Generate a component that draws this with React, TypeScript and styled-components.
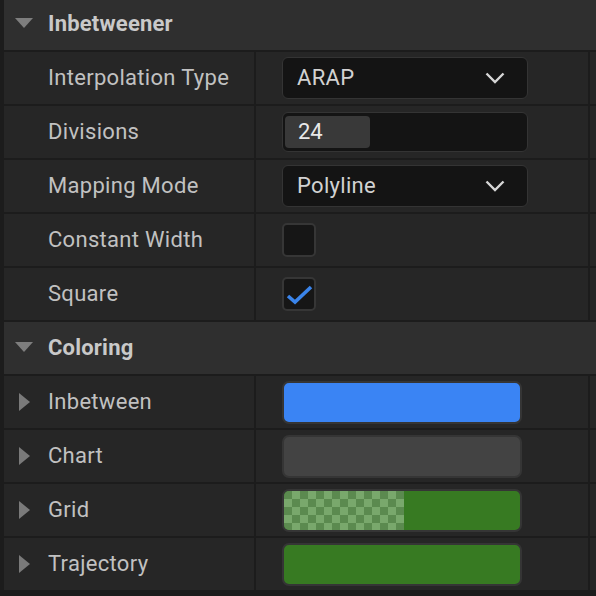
import React from "react";
import styled, { createGlobalStyle } from "styled-components";

const Global = createGlobalStyle`
  html, body { margin: 0; padding: 0; background: #1b1b1b; }
  body { font-family: Roboto, "Noto Sans", "Liberation Sans", sans-serif; }
`;

const Panel = styled.div`
  width: 596px;
  height: 596px;
  overflow: hidden;
  background: #1c1c1c;
  padding-left: 4px;
  box-sizing: border-box;
  display: flex;
  flex-direction: column;
  gap: 2px;
`;

const Header = styled.div<{ $h: number }>`
  height: ${(p) => p.$h}px;
  background: #2f2f2f;
  display: flex;
  align-items: center;
  padding-left: 10px;
  padding-bottom: ${(p) => (52 - p.$h) + 2}px;
  box-sizing: border-box;
  gap: 14px;
`;

const HeaderTitle = styled.span`
  font-size: 22px;
  font-weight: 700;
  color: #c9c9c9;
  letter-spacing: 0.2px;
`;

const Row = styled.div`
  display: grid;
  grid-template-columns: 250px 332px 6px;
  column-gap: 2px;
  height: 52px;
`;

const NameCell = styled.div`
  background: #262626;
  display: flex;
  align-items: center;
  padding-left: 10px;
  gap: 14px;
`;

const ValueCell = styled.div`
  background: #262626;
  display: flex;
  align-items: center;
  padding-left: 26px;
`;

const Filler = styled.div`
  background: #262626;
`;

const IconSlot = styled.span`
  width: 20px;
  height: 20px;
  display: flex;
  align-items: center;
  justify-content: center;
  flex: none;
`;

const Label = styled.span`
  font-size: 22px;
  color: #c1c1c1;
  letter-spacing: 0.3px;
  padding-bottom: 2px;
`;

const Combo = styled.div`
  width: 246px;
  height: 42px;
  box-sizing: border-box;
  background: #141414;
  border: 1.5px solid #343434;
  border-radius: 6px;
  display: flex;
  align-items: center;
  justify-content: space-between;
  padding: 0 22px 0 14px;
`;

const ComboText = styled.span`
  font-size: 22px;
  color: #d2d2d2;
  letter-spacing: 0.3px;
  padding-bottom: 2px;
`;

const Spin = styled.div`
  width: 246px;
  height: 40px;
  box-sizing: border-box;
  background: #141414;
  border: 1.5px solid #343434;
  border-radius: 6px;
  padding: 3px 2px;
  display: flex;
`;

const SpinFill = styled.div`
  width: 85px;
  height: 100%;
  background: #393939;
  border-radius: 4px;
  display: flex;
  align-items: center;
  padding-left: 13px;
  padding-bottom: 2px;
  box-sizing: border-box;
  font-size: 22px;
  color: #e8e8e8;
`;

const Check = styled.div`
  width: 34px;
  height: 34px;
  box-sizing: border-box;
  background: #161616;
  border: 2px solid #363636;
  border-radius: 5px;
  display: flex;
  align-items: center;
  justify-content: center;
`;

const ColorBar = styled.div<{ $color: string }>`
  width: 240px;
  height: 43px;
  box-sizing: border-box;
  border: 2px solid #353535;
  border-radius: 7px;
  background: ${(p) => p.$color};
  overflow: hidden;
  display: flex;
`;

const Checker = styled.div`
  width: 120px;
  height: 100%;
  background-color: #5b8a4f;
  background-image:
    linear-gradient(45deg, #79a86c 25%, transparent 25%, transparent 75%, #79a86c 75%),
    linear-gradient(45deg, #79a86c 25%, transparent 25%, transparent 75%, #79a86c 75%);
  background-size: 16px 16px;
  background-position: 0 0, 8px 8px;
`;

const DownTri = () => (
  <svg width="20" height="12" viewBox="0 0 20 12">
    <polygon points="1,1 19,1 10,11" fill="#7e7e7e" />
  </svg>
);

const RightTri = () => (
  <svg width="14" height="20" viewBox="0 0 14 20">
    <polygon points="2,1 13,10 2,19" fill="#7a7a7a" />
  </svg>
);

const Chevron = () => (
  <svg width="20" height="12" viewBox="0 0 20 12">
    <polyline points="1.5,1.5 10,10 18.5,1.5" fill="none" stroke="#d6d6d6" strokeWidth="2.4" />
  </svg>
);

const CheckMark = () => (
  <svg width="30" height="30" viewBox="0 0 30 30">
    <polyline points="4,17 11,23 27,8" fill="none" stroke="#3a84ea" strokeWidth="3.6" />
  </svg>
);

type Prop = { label: string; value: React.ReactNode; expandable?: boolean };

const PropRow = ({ label, value, expandable }: Prop) => (
  <Row>
    <NameCell>
      <IconSlot>{expandable ? <RightTri /> : null}</IconSlot>
      <Label>{label}</Label>
    </NameCell>
    <ValueCell>{value}</ValueCell>
    <Filler />
  </Row>
);

const Section = ({ title, h }: { title: string; h: number }) => (
  <Header $h={h}>
    <IconSlot>
      <DownTri />
    </IconSlot>
    <HeaderTitle>{title}</HeaderTitle>
  </Header>
);

export default function App() {
  return (
    <>
      <Global />
      <Panel>
        <Section title="Inbetweener" h={50} />
        <PropRow
          label="Interpolation Type"
          value={
            <Combo>
              <ComboText>ARAP</ComboText>
              <Chevron />
            </Combo>
          }
        />
        <PropRow
          label="Divisions"
          value={
            <Spin>
              <SpinFill>24</SpinFill>
            </Spin>
          }
        />
        <PropRow
          label="Mapping Mode"
          value={
            <Combo>
              <ComboText>Polyline</ComboText>
              <Chevron />
            </Combo>
          }
        />
        <PropRow label="Constant Width" value={<Check />} />
        <PropRow
          label="Square"
          value={
            <Check>
              <CheckMark />
            </Check>
          }
        />
        <Section title="Coloring" h={52} />
        <PropRow expandable label="Inbetween" value={<ColorBar $color="#3a84f4" />} />
        <PropRow expandable label="Chart" value={<ColorBar $color="#434343" />} />
        <PropRow
          expandable
          label="Grid"
          value={
            <ColorBar $color="#377a22">
              <Checker />
            </ColorBar>
          }
        />
        <PropRow expandable label="Trajectory" value={<ColorBar $color="#377a22" />} />
      </Panel>
    </>
  );
}
